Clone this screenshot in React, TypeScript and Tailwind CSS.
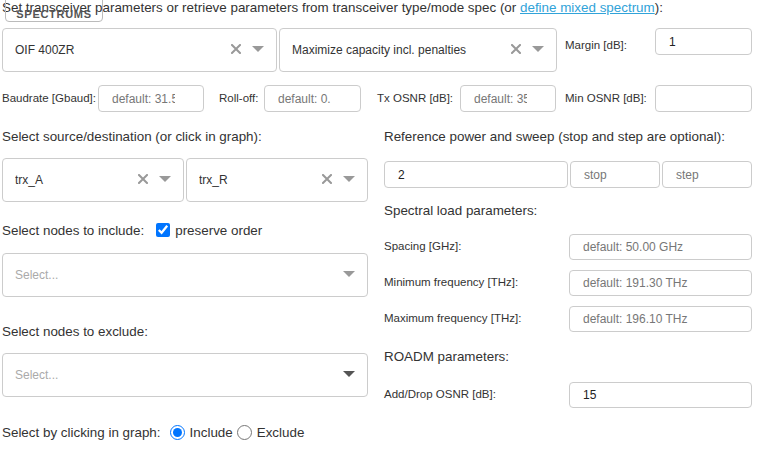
import React from 'react';

interface SelectProps {
  value?: string;
  placeholder?: string;
  clearable?: boolean;
  caretColor?: string;
  className?: string;
}

const ClearIcon = () => (
  <svg width="10" height="10" viewBox="0 0 10 10" className="shrink-0">
    <path d="M1 1 L9 9 M9 1 L1 9" stroke="#999" strokeWidth="2" strokeLinecap="square" />
  </svg>
);

const Caret = ({ color = '#999' }: { color?: string }) => (
  <svg width="12" height="6" viewBox="0 0 12 6" className="shrink-0 mb-[3px]">
    <path d="M0 0 L12 0 L6 6 Z" fill={color} />
  </svg>
);

const Select: React.FC<SelectProps> = ({ value, placeholder = 'Select...', clearable, caretColor, className = '' }) => (
  <div className={`flex items-center h-[44px] border border-[#ccc] rounded-[4px] bg-white pl-[12px] pr-[12px] ${className}`}>
    <span className={`flex-1 truncate text-[12px] ${value ? 'text-[#333]' : 'text-[#aaa]'}`}>{value ?? placeholder}</span>
    {clearable && (
      <span className="mr-[11px] mb-[3px] flex items-center">
        <ClearIcon />
      </span>
    )}
    <Caret color={caretColor} />
  </div>
);

const Field = ({ value, placeholder, className = '' }: { value?: string; placeholder?: string; className?: string }) => (
  <input
    readOnly
    defaultValue={value}
    placeholder={placeholder}
    className={`h-[27px] border border-[#ccc] rounded-[4px] bg-white pl-[13px] text-[12px] text-[#222] placeholder:text-[#777] outline-none ${className}`}
  />
);

const App: React.FC = () => {
  const loadRows = [
    { label: 'Spacing [GHz]:', placeholder: 'default: 50.00 GHz' },
    { label: 'Minimum frequency [THz]:', placeholder: 'default: 191.30 THz' },
    { label: 'Maximum frequency [THz]:', placeholder: 'default: 196.10 THz' },
  ];

  return (
    <div className="w-[757px] h-[455px] overflow-hidden bg-white text-[#333] font-['Liberation_Sans',Arial,sans-serif]">
      {/* transceiver header */}
      <div className="relative">
        <p className="text-[13.4px] leading-[16px] pl-[2px]">
          Set transceiver parameters or retrieve parameters from transceiver type/mode spec (or{' '}
          <a className="text-[#31a3d9] underline">define mixed spectrum</a>):
        </p>
        <button className="absolute left-[5px] top-[-10px] w-[98px] h-[32px] border border-[#bbb] rounded-[4px] bg-transparent flex items-end justify-center pb-[1px] text-[11px] leading-[12px] font-bold tracking-[0.7px] text-[#555]">
          SPECTRUMS
        </button>
      </div>

      <div className="flex items-start mt-[12px] pl-[2px]">
        <Select value="OIF 400ZR" clearable className="w-[275px]" />
        <Select value="Maximize capacity incl. penalties" clearable className="w-[278px] ml-[2px]" />
        <span className="ml-[8px] w-[90px] mt-[9px] text-[11.5px]">Margin [dB]:</span>
        <Field value="1" className="w-[97px]" />
      </div>

      <div className="flex items-center mt-[13px] pl-[2px] text-[11.5px]">
        <span className="w-[96px]">Baudrate [Gbaud]:</span>
        <Field placeholder="default: 31.5 GBaud" className="w-[106px] pr-[28px]" />
        <span className="ml-[15px] w-[45px]">Roll-off:</span>
        <Field placeholder="default: 0.15" className="w-[97px] pr-[29px]" />
        <span className="ml-[16px] w-[83px]">Tx OSNR [dB]:</span>
        <Field placeholder="default: 35 dB" className="w-[96px] pr-[28px]" />
        <span className="ml-[9px] w-[90px]">Min OSNR [dB]:</span>
        <Field className="w-[97px]" />
      </div>

      <div className="flex mt-[17px]">
        {/* left column */}
        <div className="w-[384px] pl-[2px] flex flex-col">
          <p className="text-[13.4px] leading-[16px]">Select source/destination (or click in graph):</p>
          <div className="flex mt-[13px] gap-[2px]">
            <Select value="trx_A" clearable className="w-[182px]" />
            <Select value="trx_R" clearable className="w-[182px]" />
          </div>
          <div className="flex items-center mt-[21px] h-[16px] text-[13.4px]">
            <span>Select nodes to include:</span>
            <input type="checkbox" defaultChecked className="ml-[12px] mb-[2px] w-[14px] h-[14px] m-0 accent-[#0075ff]" />
            <span className="ml-[5px]">preserve order</span>
          </div>
          <Select className="w-[366px] mt-[14px]" />
          <p className="mt-[27px] text-[13.4px] leading-[16px]">Select nodes to exclude:</p>
          <Select className="w-[366px] mt-[13px]" caretColor="#555" />
          <div className="flex items-center mt-[28px] h-[16px] text-[13.4px]">
            <span>Select by clicking in graph:</span>
            <input type="radio" name="pick" defaultChecked className="ml-[9px] mb-[2px] w-[15px] h-[15px] m-0 accent-[#0075ff]" />
            <span className="ml-[5px]">Include</span>
            <input type="radio" name="pick" className="ml-[4px] mb-[2px] w-[15px] h-[15px] m-0" />
            <span className="ml-[5px]">Exclude</span>
          </div>
        </div>

        {/* right column */}
        <div className="w-[369px] flex flex-col">
          <p className="text-[13.4px] leading-[16px]">Reference power and sweep (stop and step are optional):</p>
          <div className="flex mt-[16px] gap-[2px]">
            <Field value="2" className="w-[184px]" />
            <Field placeholder="stop" className="w-[90px]" />
            <Field placeholder="step" className="w-[90px]" />
          </div>
          <p className="mt-[15px] text-[13.4px] leading-[16px]">Spectral load parameters:</p>
          <div className="flex flex-col mt-[15px] gap-[10px]">
            {loadRows.map((row) => (
              <div key={row.label} className="flex items-center">
                <span className="w-[185px] text-[11.5px]">{row.label}</span>
                <Field placeholder={row.placeholder} className="w-[183px] !h-[26px]" />
              </div>
            ))}
          </div>
          <p className="mt-[17px] text-[13.4px] leading-[16px]">ROADM parameters:</p>
          <div className="flex items-center mt-[17px]">
            <span className="w-[185px] text-[11.5px]">Add/Drop OSNR [dB]:</span>
            <Field value="15" className="w-[183px] !h-[26px]" />
          </div>
        </div>
      </div>
    </div>
  );
};

export default App;
